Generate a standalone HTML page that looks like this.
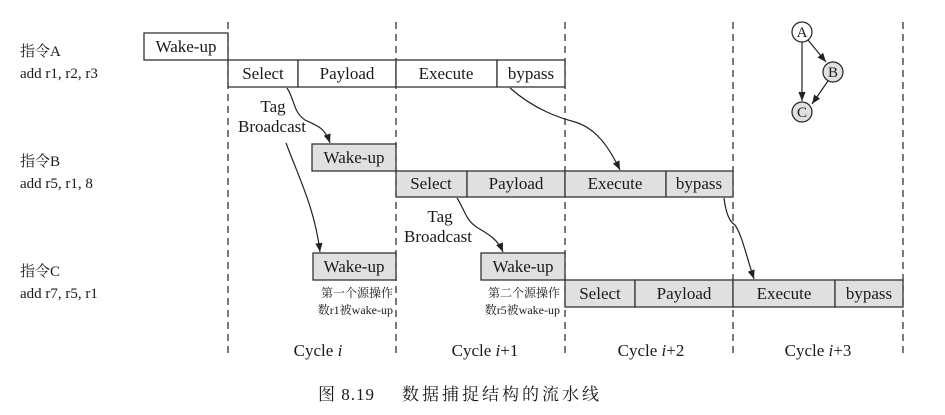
<!DOCTYPE html>
<html><head><meta charset="utf-8"><style>
html,body{margin:0;padding:0;background:#fff;}
svg{display:block;}
text{font-family:"Liberation Serif","Noto Serif CJK SC",serif;fill:#1a1a1a;}
</style></head><body>
<svg width="945" height="415" viewBox="0 0 945 415" xmlns="http://www.w3.org/2000/svg">
<defs>
<marker id="a2" viewBox="0 0 10 10" refX="10" refY="5" markerWidth="9" markerHeight="9" orient="auto" markerUnits="userSpaceOnUse"><path d="M0,1 L10,5 L0,9 Z" fill="#222"/></marker></defs>
<g stroke="#333" stroke-width="1.3" stroke-dasharray="7,5">
<line x1="228" y1="22" x2="228" y2="358"/><line x1="396" y1="22" x2="396" y2="358"/><line x1="565" y1="22" x2="565" y2="358"/><line x1="733" y1="22" x2="733" y2="358"/><line x1="903" y1="22" x2="903" y2="358"/>
</g>
<g stroke="#333" stroke-width="1.3">
<rect x="144" y="33" width="84" height="27" fill="#fff"/>
<rect x="228" y="60" width="70" height="27" fill="#fff"/><rect x="298" y="60" width="98" height="27" fill="#fff"/><rect x="396" y="60" width="101" height="27" fill="#fff"/><rect x="497" y="60" width="68" height="27" fill="#fff"/>
<rect x="312" y="144" width="84" height="27" fill="#e0e0e0"/>
<rect x="396" y="171" width="71" height="26" fill="#e0e0e0"/><rect x="467" y="171" width="98" height="26" fill="#e0e0e0"/><rect x="565" y="171" width="101" height="26" fill="#e0e0e0"/><rect x="666" y="171" width="67" height="26" fill="#e0e0e0"/>
<rect x="313" y="253" width="83" height="27" fill="#e0e0e0"/><rect x="481" y="253" width="84" height="27" fill="#e0e0e0"/>
<rect x="565" y="280" width="70" height="27" fill="#e0e0e0"/><rect x="635" y="280" width="98" height="27" fill="#e0e0e0"/><rect x="733" y="280" width="102" height="27" fill="#e0e0e0"/><rect x="835" y="280" width="68" height="27" fill="#e0e0e0"/>
</g>
<g font-size="17" text-anchor="middle">
<text x="186" y="52">Wake-up</text>
<text x="263" y="79">Select</text><text x="347" y="79">Payload</text><text x="446" y="79">Execute</text><text x="531" y="79">bypass</text>
<text x="354" y="163">Wake-up</text>
<text x="431" y="189">Select</text><text x="516" y="189">Payload</text><text x="615" y="189">Execute</text><text x="699" y="189">bypass</text>
<text x="354" y="272">Wake-up</text><text x="523" y="272">Wake-up</text>
<text x="600" y="299">Select</text><text x="684" y="299">Payload</text><text x="784" y="299">Execute</text><text x="869" y="299">bypass</text>
<text x="273" y="112">Tag</text><text x="272" y="132">Broadcast</text>
<text x="440" y="222">Tag</text><text x="438" y="242">Broadcast</text>
<text x="318" y="356">Cycle <tspan font-style="italic">i</tspan></text>
<text x="485" y="356">Cycle <tspan font-style="italic">i</tspan>+1</text>
<text x="651" y="356">Cycle <tspan font-style="italic">i</tspan>+2</text>
<text x="818" y="356">Cycle <tspan font-style="italic">i</tspan>+3</text>
</g>
<g font-size="12" text-anchor="end">
<text x="393" y="297">第一个源操作</text><text x="393" y="314">数r1被wake-up</text>
<text x="560" y="297">第二个源操作</text><text x="560" y="314">数r5被wake-up</text>
</g>
<g font-size="15">
<text x="20" y="56">指令A</text><text x="20" y="78">add  r1, r2, r3</text>
<text x="20" y="166">指令B</text><text x="20" y="188">add  r5, r1, 8</text>
<text x="20" y="276">指令C</text><text x="20" y="298">add  r7, r5, r1</text>
</g>
<text x="318" y="400" font-size="17" letter-spacing="1">图 8.19</text>
<text x="402" y="400" font-size="17" letter-spacing="3">数据捕捉结构的流水线</text>
<g fill="none" stroke="#222" stroke-width="1.2">
<path d="M287,88 C295,100 293,112 305,120 C318,126 325,128 330,143" marker-end="url(#a2)"/>
<path d="M286,143 C300,180 315,210 320,252" marker-end="url(#a2)"/>
<path d="M510,88 C535,110 560,118 575,122 C595,128 608,145 620,170" marker-end="url(#a2)"/>
<path d="M457,198 C465,210 465,220 478,228 C490,235 498,240 503,252" marker-end="url(#a2)"/>
<path d="M724,198 C726,215 730,222 735,225 C742,235 746,255 754,279" marker-end="url(#a2)"/>
<line x1="802" y1="42" x2="802" y2="101" marker-end="url(#a2)"/>
<line x1="808" y1="40" x2="826" y2="62" marker-end="url(#a2)"/>
<line x1="828" y1="81" x2="812" y2="104" marker-end="url(#a2)"/>
</g>
<g stroke="#222" stroke-width="1.2">
<circle cx="802" cy="32" r="10" fill="#fff"/><circle cx="833" cy="72" r="10" fill="#e0e0e0"/><circle cx="802" cy="112" r="10" fill="#e0e0e0"/>
</g>
<g font-size="15" text-anchor="middle"><text x="802" y="37">A</text><text x="833" y="77">B</text><text x="802" y="117">C</text></g>
</svg>
</body></html>
